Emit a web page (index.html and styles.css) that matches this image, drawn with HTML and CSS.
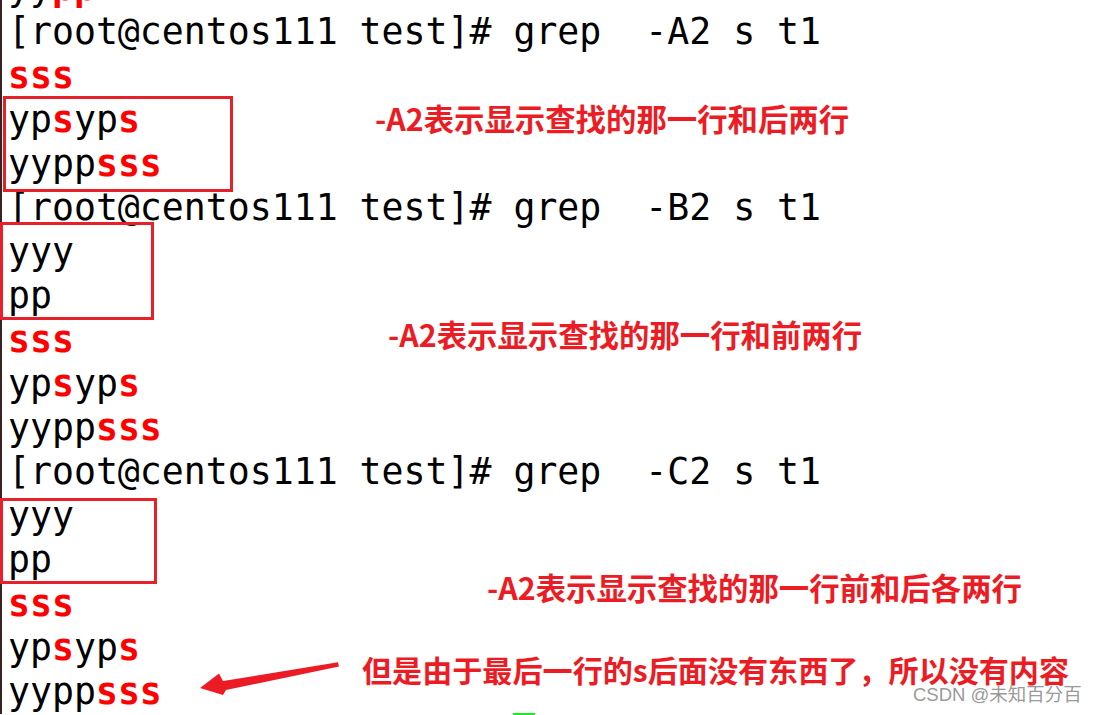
FILE: index.html
```html
<!DOCTYPE html>
<html lang="zh-CN">
<head>
<meta charset="utf-8">
<title>grep -A -B -C</title>
<link rel="stylesheet" href="styles.css">
</head>
<body>
<div class="screen">
  <div class="term">
    <div class="ln">yy<b class="hl">pp</b></div>
    <div class="ln">[root@centos111 test]# grep  -A2 s t1</div>
    <div class="ln"><b class="hl">sss</b></div>
    <div class="ln">yp<b class="hl">s</b>yp<b class="hl">s</b></div>
    <div class="ln">yypp<b class="hl">sss</b></div>
    <div class="ln">[root@centos111 test]# grep  -B2 s t1</div>
    <div class="ln">yyy</div>
    <div class="ln">pp</div>
    <div class="ln"><b class="hl">sss</b></div>
    <div class="ln">yp<b class="hl">s</b>yp<b class="hl">s</b></div>
    <div class="ln">yypp<b class="hl">sss</b></div>
    <div class="ln">[root@centos111 test]# grep  -C2 s t1</div>
    <div class="ln">yyy</div>
    <div class="ln">pp</div>
    <div class="ln"><b class="hl">sss</b></div>
    <div class="ln">yp<b class="hl">s</b>yp<b class="hl">s</b></div>
    <div class="ln">yypp<b class="hl">sss</b></div>
  </div>

  <div class="box box1"></div>
  <div class="box box2"></div>
  <div class="box box3"></div>

  <p class="note n1">-A2表示显示查找的那一行和后两行</p>
  <p class="note n2">-A2表示显示查找的那一行和前两行</p>
  <p class="note n3">-A2表示显示查找的那一行前和后各两行</p>
  <p class="note n4">但是由于最后一行的s后面没有东西了，所以没有内容</p>

  <svg class="arrow" width="150" height="45" viewBox="0 0 150 45">
    <polygon points="143,7.3 28,26 24,18.5 5,33 28,40 31,35 144,11.5" fill="#ec1c24"/>
  </svg>

  <div class="watermark">CSDN @未知百分百</div>
  <div class="greenmark"></div>
</div>
</body>
</html>
```

FILE: styles.css
```css
html, body {
  margin: 0;
  padding: 0;
  background: #ffffff;
}

.screen {
  position: relative;
  width: 1100px;
  height: 715px;
  overflow: hidden;
  background: #ffffff;
}

.term {
  margin-top: -34px;
  padding-left: 6px;
  border-left: 2px solid #3a2222;
  font-family: "DejaVu Sans Mono", "Liberation Mono", monospace;
  font-size: 36.5px;
  line-height: 44px;
  color: #000000;
}

.ln {
  height: 44px;
  white-space: pre;
}

.hl {
  color: #ff0000;
  font-weight: bold;
}

.box {
  position: absolute;
  border: 3px solid #e8202a;
  box-sizing: border-box;
}

.box1 {
  left: 3px;
  top: 96px;
  width: 230px;
  height: 96px;
}

.box2 {
  left: 0;
  top: 222px;
  width: 154px;
  height: 98px;
}

.box3 {
  left: 0;
  top: 498px;
  width: 157px;
  height: 86px;
}

.note {
  position: absolute;
  margin: 0;
  font-family: "Noto Sans CJK SC", "Noto Sans", sans-serif;
  font-weight: bold;
  font-size: 30.4px;
  line-height: 30px;
  color: #ec1c24;
  white-space: nowrap;
}

.n1 { left: 375px; top: 103px; }
.n2 { left: 388px; top: 319px; }
.n3 { left: 487px; top: 572px; }
.n4 { left: 362px; top: 654px; font-size: 30.1px; }

.arrow {
  position: absolute;
  left: 195px;
  top: 655px;
}

.watermark {
  position: absolute;
  left: 913px;
  top: 684px;
  font-family: "Liberation Sans", "Noto Sans CJK SC", sans-serif;
  font-size: 18.5px;
  line-height: 22px;
  color: #9a9a9a;
  white-space: nowrap;
}

.greenmark {
  position: absolute;
  left: 513px;
  top: 713px;
  width: 22px;
  height: 2px;
  background: #1fe81f;
}
```
